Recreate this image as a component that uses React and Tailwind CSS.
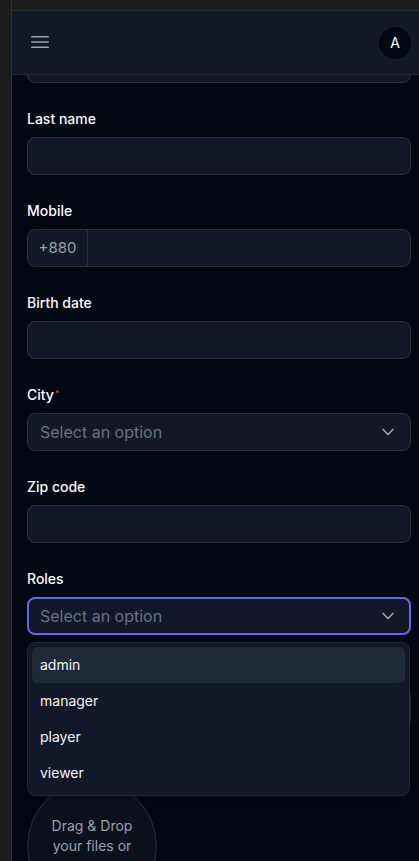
import { ChevronDown } from 'lucide-react'

const Field = ({ label, required, children }) => (
  <div className="flex flex-col gap-2">
    <label className="h-5 text-sm leading-5 font-medium text-gray-50">
      {label}
      {required && <sup className="text-red-500 text-[8px] ml-px">*</sup>}
    </label>
    {children}
  </div>
)

const TextInput = () => (
  <div className="h-[38px] rounded-lg border border-[#2b303b] bg-[#111827]" />
)

const SelectBox = ({ active }) => (
  <div
    className={`h-[38px] rounded-lg bg-[#111827] flex items-center justify-between ${
      active ? 'border-2 border-[#6366f1] pl-[11px] pr-[11px]' : 'border border-[#2b303b] pl-3 pr-3'
    }`}
  >
    <span className="text-base text-gray-500">Select an option</span>
    <ChevronDown className="h-5 w-5 text-gray-400" strokeWidth={2} />
  </div>
)

const roles = ['admin', 'manager', 'player', 'viewer']

export default function App() {
  return (
    <div className="flex min-h-[861px] bg-[#1c1c1c] font-['Inter',sans-serif]">
      <div className="w-3 shrink-0 border-r border-[#2f2f2f]" />
      <div className="flex-1 mt-[10px] h-[851px] relative overflow-hidden bg-[#030712] border-t border-[#2a2e36]">
        <header className="absolute top-0 inset-x-0 z-10 h-[64px] bg-[#111827] border-b border-[#1f2937] flex items-center justify-between pl-4 pr-2">
          <svg className="h-6 w-6 text-gray-400 -mt-px" fill="none" viewBox="0 0 24 24" strokeWidth={1.5} stroke="currentColor">
            <path strokeLinecap="round" strokeLinejoin="round" d="M3.75 6.75h16.5M3.75 12h16.5m-16.5 5.25h16.5" />
          </svg>
          <div className="h-8 w-8 rounded-full bg-[#030712] flex items-center justify-center text-white text-sm">A</div>
        </header>

        <div className="pt-[6px] pl-[15px] pr-2 flex flex-col gap-[26px]">
          <Field label="First name">
            <TextInput />
          </Field>
          <Field label="Last name">
            <TextInput />
          </Field>
          <Field label="Mobile">
            <div className="h-[38px] rounded-lg border border-[#2b303b] bg-[#111827] flex">
              <span className="w-[60px] border-r border-[#2b303b] flex items-center justify-center text-[15px] text-gray-400">+880</span>
              <div className="flex-1" />
            </div>
          </Field>
          <Field label="Birth date">
            <TextInput />
          </Field>
          <Field label="City" required>
            <SelectBox />
          </Field>
          <Field label="Zip code">
            <TextInput />
          </Field>
          <div className="relative z-20">
            <Field label="Roles">
              <SelectBox active />
            </Field>
            <div className="absolute left-0 right-px top-full mt-[7px] rounded-lg border border-[#1f2937] bg-[#111827] p-1 shadow-lg">
              {roles.map((r, i) => (
                <div
                  key={r}
                  className={`h-9 px-2 flex items-center rounded-md text-sm text-gray-100 ${i === 0 ? 'bg-[#1f2937]' : ''}`}
                >
                  {r}
                </div>
              ))}
            </div>
          </div>
          <Field label="">
            <TextInput />
          </Field>
          <Field label="">
            <div className="w-[130px] h-[130px] rounded-full border border-[#2b303b] bg-[#0b101b] flex flex-col items-center justify-center pb-5 text-sm leading-5 text-gray-400 text-center">
              <span>Drag &amp; Drop</span>
              <span>your files or</span>
            </div>
          </Field>
        </div>
      </div>
    </div>
  )
}
